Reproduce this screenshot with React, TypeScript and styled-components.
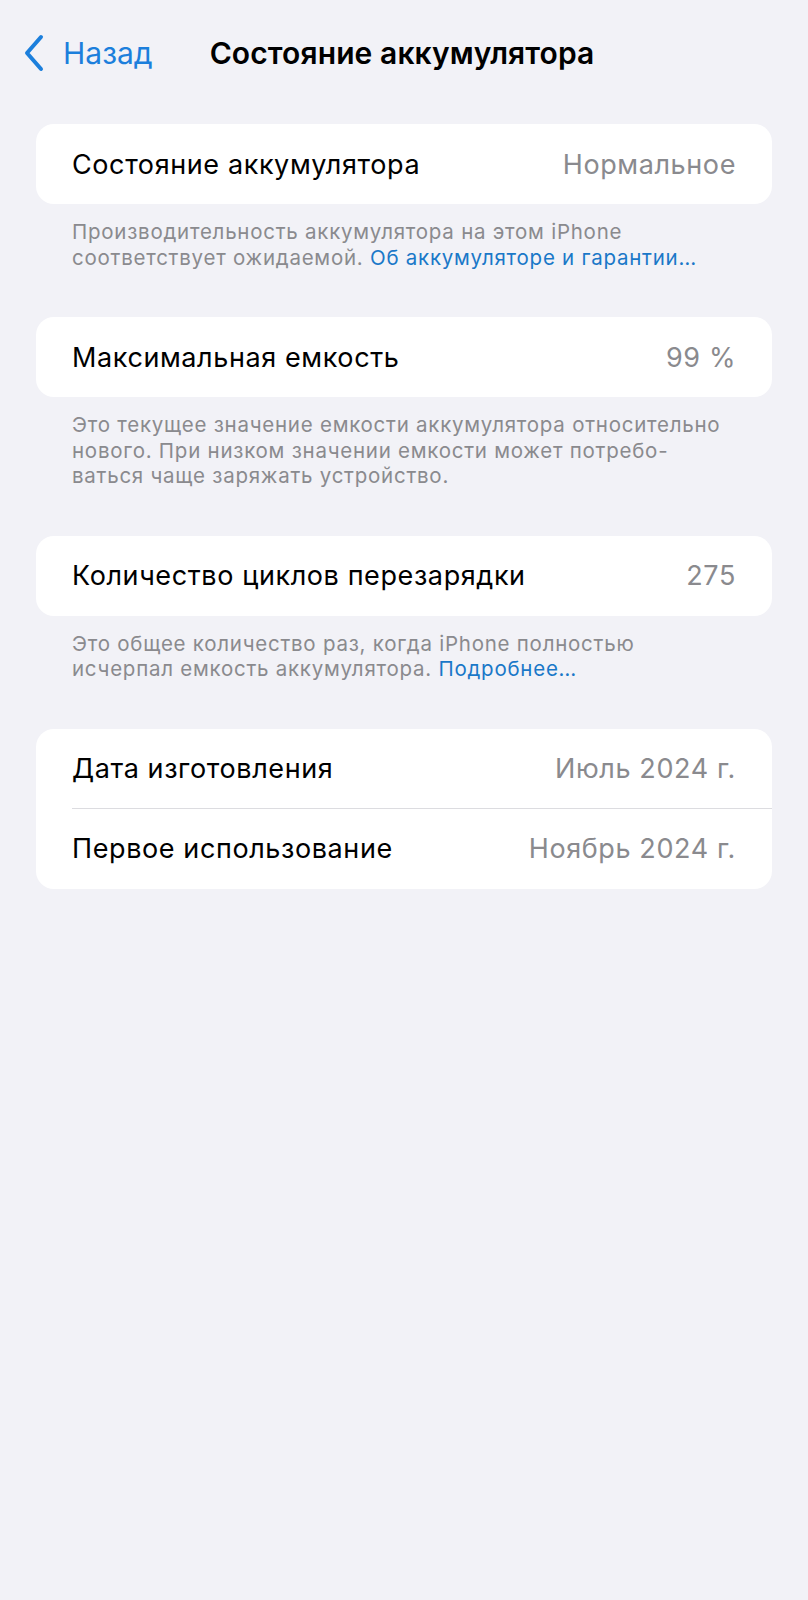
import React from "react";
import styled, { createGlobalStyle } from "styled-components";

const GlobalStyle = createGlobalStyle`
  html, body {
    margin: 0;
    padding: 0;
    background: #f2f2f7;
  }
  body {
    font-family: Inter, "Noto Sans", "Liberation Sans", sans-serif;
    -webkit-font-smoothing: antialiased;
  }
`;

const Page = styled.div`
  min-height: 1600px;
  background: #f2f2f7;
  padding: 0 36px 0 36px;
  box-sizing: border-box;
`;

const NavBar = styled.div`
  display: flex;
  align-items: center;
  height: 106px;
  margin-left: -14px;
  margin-bottom: 18px;
`;

const BackButton = styled.div`
  display: flex;
  align-items: center;
  gap: 17px;
  color: #1c7fdc;
  font-size: 30px;
`;

const Title = styled.div`
  margin-left: 57px;
  font-size: 30px;
  font-weight: 600;
  color: #000;
  letter-spacing: 0.1px;
`;

const Card = styled.div`
  background: #fff;
  border-radius: 18px;
  overflow: hidden;
`;

const Row = styled.div<{ $divider?: boolean }>`
  display: flex;
  justify-content: space-between;
  align-items: center;
  height: 80px;
  margin-left: 36px;
  padding-right: 36px;
  box-sizing: border-box;
  border-bottom: ${(p) => (p.$divider ? "1.5px solid #dcdce0" : "none")};
`;

const Label = styled.span`
  font-size: 27px;
  color: #000;
  letter-spacing: 0.6px;
`;

const Value = styled.span`
  font-size: 27px;
  color: #8a8a8e;
  letter-spacing: 0.6px;
`;

const Footer = styled.p`
  margin: 0;
  padding: 15px 36px 0 36px;
  font-size: 20.5px;
  line-height: 25.5px;
  color: #8a8a8e;
  letter-spacing: 0.75px;
`;

const Link = styled.span`
  color: #1a78c8;
`;

const Section = styled.div`
  margin-bottom: 47px;
`;

const Chevron = () => (
  <svg width="24" height="38" viewBox="0 0 24 38" fill="none">
    <path
      d="M19 3 L5 19 L19 35"
      stroke="#1c7fdc"
      strokeWidth="4"
      strokeLinecap="round"
      strokeLinejoin="round"
    />
  </svg>
);

export default function App() {
  return (
    <>
      <GlobalStyle />
      <Page>
        <NavBar>
          <BackButton>
            <Chevron />
            <span>Назад</span>
          </BackButton>
          <Title>Состояние аккумулятора</Title>
        </NavBar>

        <Section>
          <Card>
            <Row>
              <Label>Состояние аккумулятора</Label>
              <Value>Нормальное</Value>
            </Row>
          </Card>
          <Footer>
            Производительность аккумулятора на этом iPhone
            <br />
            соответствует ожидаемой.{" "}
            <Link>Об аккумуляторе и гарантии…</Link>
          </Footer>
        </Section>

        <Section>
          <Card>
            <Row>
              <Label>Максимальная емкость</Label>
              <Value>99 %</Value>
            </Row>
          </Card>
          <Footer>
            Это текущее значение емкости аккумулятора относительно
            <br />
            нового. При низком значении емкости может потребо-
            <br />
            ваться чаще заряжать устройство.
          </Footer>
        </Section>

        <Section>
          <Card>
            <Row>
              <Label>Количество циклов перезарядки</Label>
              <Value>275</Value>
            </Row>
          </Card>
          <Footer>
            Это общее количество раз, когда iPhone полностью
            <br />
            исчерпал емкость аккумулятора. <Link>Подробнее…</Link>
          </Footer>
        </Section>

        <Section>
          <Card>
            <Row $divider>
              <Label>Дата изготовления</Label>
              <Value>Июль 2024 г.</Value>
            </Row>
            <Row>
              <Label>Первое использование</Label>
              <Value>Ноябрь 2024 г.</Value>
            </Row>
          </Card>
        </Section>
      </Page>
    </>
  );
}
